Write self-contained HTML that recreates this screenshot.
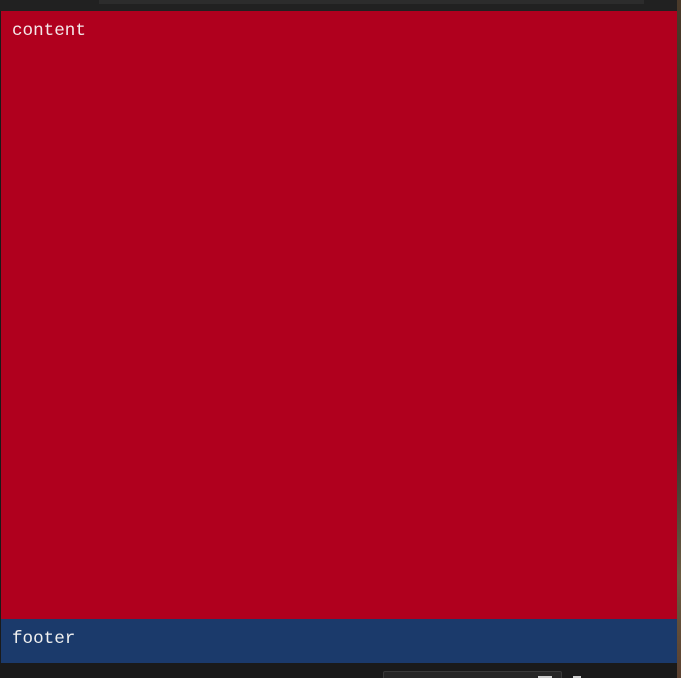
<!DOCTYPE html>
<html><head><style>
html,body{margin:0;padding:0;width:681px;height:678px;overflow:hidden;background:#1a1a1a;position:relative;font-family:"Liberation Mono",monospace;}
.top{position:absolute;left:0;top:0;width:681px;height:11px;background:#212121;}
.sb{position:absolute;left:99px;top:0;width:545px;height:4px;background:#2c2c2c;}
.edge{position:absolute;left:677px;top:0;width:4px;height:678px;background:linear-gradient(#4a3a2a,#3a2c20 30%,#1a2028 55%,#6a5a40 85%,#5a4030);}
.content{position:absolute;left:1px;top:11px;width:676px;height:608px;background:#b0001e;color:#f4e8ea;font-size:17.6px;}
.content span{position:absolute;left:11px;top:10px;}
.footer{position:absolute;left:1px;top:619px;width:676px;height:44px;background:#1b3a6b;color:#f0f0f0;font-size:17.6px;}
.footer span{position:absolute;left:11px;top:10px;}
.bot{position:absolute;left:0;top:663px;width:677px;height:15px;background:#1a1a1a;}
.box{position:absolute;left:383px;top:671px;width:177px;height:10px;border:1px solid #3a3a3a;border-radius:2px;background:#262626;}
.w1{position:absolute;left:538px;top:676px;width:14px;height:2px;background:#ccc;}
.w2{position:absolute;left:573px;top:676px;width:8px;height:2px;background:#ccc;}
</style></head><body>
<div class="top"><div class="sb"></div></div>
<div class="content"><span>content</span></div>
<div class="footer"><span>footer</span></div>
<div class="bot"></div>
<div class="box"></div><div class="w1"></div><div class="w2"></div>
<div class="edge"></div>
</body></html>
